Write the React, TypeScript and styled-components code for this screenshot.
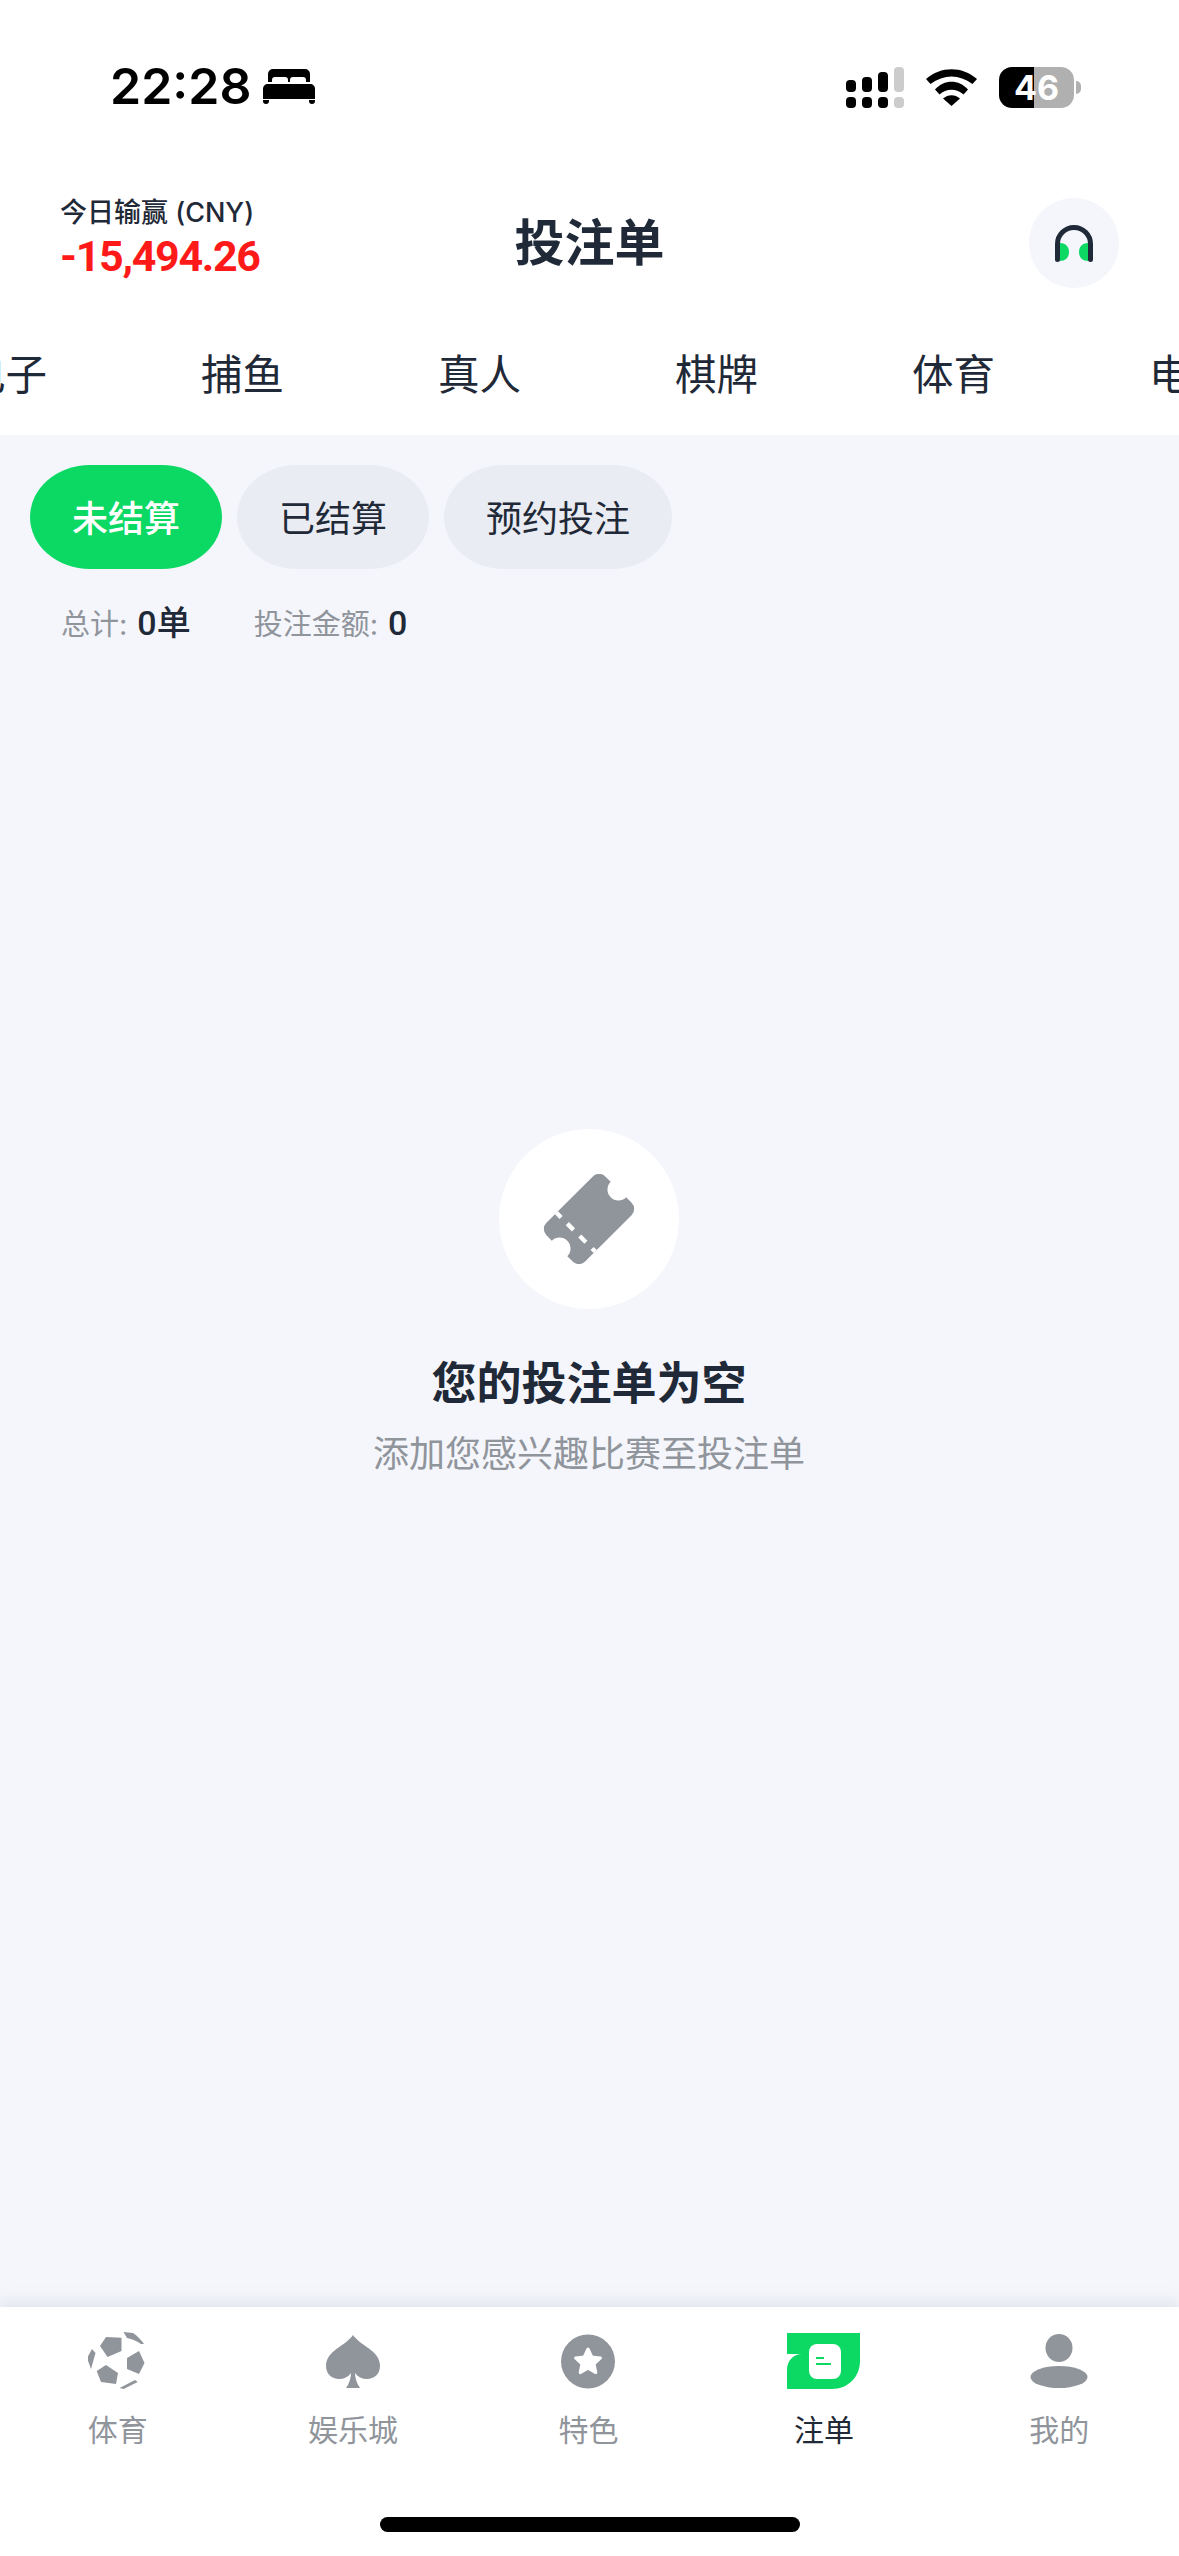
import React from 'react'
import styled, {createGlobalStyle} from 'styled-components'

const GlobalStyle = createGlobalStyle`
  html, body {
    margin: 0;
    padding: 0;
    background: #f4f6fb;
  }
  * {
    box-sizing: border-box;
  }
`;

const CJK = `Inter, "Noto Sans CJK SC", sans-serif`;

const Page = styled.div`
  width: 1179px;
  height: 2556px;
  display: flex;
  flex-direction: column;
  overflow: hidden;
  background: #f4f6fb;
  color: #1f2937;
  font-family: ${CJK};
`;

const TopArea = styled.header`
  background: #fff;
`;

const StatusBar = styled.div`
  height: 188px;
  display: flex;
  justify-content: space-between;
  align-items: flex-start;
  padding: 58px 98px 0 110px;
`;

const StatusLeft = styled.div`
  display: flex;
  align-items: center;
  gap: 12px;
  height: 56px;
`;

const Clock = styled.span`
  font-size: 50px;
  line-height: 56px;
  font-weight: 600;
  color: #000;
`;

const StatusRight = styled.div`
  display: flex;
  align-items: center;
  height: 41px;
  margin-top: 9px;
  gap: 22px;
`;

const Battery = styled.div`
  display: flex;
  align-items: center;
  gap: 2px;
`;

const BatteryBody = styled.div`
  width: 75px;
  height: 41px;
  border-radius: 13px;
  background: linear-gradient(90deg, #000 0 47%, #b0b0b0 47% 100%);
  color: #fff;
  font-size: 34px;
  line-height: 41px;
  font-weight: 700;
  text-align: center;
`;

const BatteryNub = styled.div`
  width: 5px;
  height: 13px;
  border-radius: 0 6px 6px 0;
  background: #b0b0b0;
`;

const HeaderRow = styled.div`
  height: 110px;
  display: grid;
  grid-template-columns: 1fr auto 1fr;
  align-items: center;
  padding: 0 60px;
`;

const Balance = styled.div`
  display: flex;
  flex-direction: column;
  margin-top: -6px;
`;

const BalanceLabel = styled.span`
  font-size: 27px;
  line-height: 32px;
  font-weight: 500;
`;

const BalanceValue = styled.span`
  font-family: Roboto, sans-serif;
  font-size: 43px;
  line-height: 54px;
  font-weight: 700;
  color: #ff1a1a;
  letter-spacing: -1.3px;
`;

const Title = styled.h1`
  margin: 0;
  font-size: 50px;
  line-height: 70px;
  font-weight: 700;
`;

const SupportButton = styled.div`
  justify-self: end;
  width: 90px;
  height: 90px;
  border-radius: 50%;
  background: #f4f6fb;
  display: flex;
  align-items: center;
  justify-content: center;
`;

const CategoryStrip = styled.nav`
  height: 137px;
  display: flex;
  align-items: center;
  overflow: hidden;
  padding-top: 16px;
`;

const CategoryTrack = styled.div`
  display: flex;
  flex: none;
  margin-left: -113px;
`;

const Category = styled.span`
  flex: none;
  width: 237px;
  text-align: center;
  font-size: 41.500px;
  line-height: 56px;
  color: #1f2937;
`;

const Filters = styled.div`
  display: flex;
  gap: 15px;
  padding: 30px 30px 0;
`;

const FilterPill = styled.div<{$active?: boolean; $wide?: boolean}>`
  width: ${p => (p.$wide ? 228 : 192)}px;
  height: 104px;
  border-radius: 60px / 52px;
  background: ${p => (p.$active ? '#0cd964' : '#e9ecf2')};
  color: ${p => (p.$active ? '#fff' : '#1f2937')};
  font-size: 36px;
  font-weight: ${p => (p.$active ? 500 : 400)};
  padding-bottom: 2px;
  display: flex;
  align-items: center;
  justify-content: center;
`;

const Summary = styled.div`
  display: flex;
  gap: 63px;
  padding: 32px 61px 0;
`;

const SummaryItem = styled.div`
  font-size: 29px;
  line-height: 44px;
  color: #90949b;
  display: flex;
  align-items: baseline;
  gap: 10px;
`;

const SummaryValue = styled.b`
  font-family: Roboto, "Noto Sans CJK SC", sans-serif;
  font-size: 34px;
  font-weight: 500;
  color: #1f2937;
`;

const EmptyState = styled.section`
  flex: 1;
  display: flex;
  flex-direction: column;
  align-items: center;
  padding: 482px 1px 0 0;
`;

const EmptyBadge = styled.div`
  width: 180px;
  height: 180px;
  border-radius: 50%;
  background: #fff;
  display: flex;
  align-items: center;
  justify-content: center;
`;

const EmptyTitle = styled.h2`
  margin: 44px 0 0;
  font-size: 45px;
  line-height: 62px;
  font-weight: 700;
`;

const EmptyText = styled.p`
  margin: 14px 0 0;
  font-size: 36px;
  line-height: 50px;
  color: #90949b;
`;

const BottomBar = styled.footer`
  height: 249px;
  background: #fff;
  box-shadow: 0 -6px 14px rgba(150, 156, 170, 0.18);
  display: flex;
  flex-direction: column;
  align-items: center;
`;

const NavRow = styled.div`
  width: 100%;
  display: grid;
  grid-template-columns: repeat(5, 1fr);
  padding: 25px 2px 0 0;
`;

const NavItem = styled.div<{$active?: boolean}>`
  display: flex;
  flex-direction: column;
  align-items: center;
  color: ${p => (p.$active ? '#1f2937' : '#90949b')};
  font-size: 30px;
  line-height: 42px;
`;

const NavIcon = styled.div`
  height: 58px;
  display: flex;
  align-items: center;
  justify-content: center;
  margin-bottom: 19px;
`;

const HomeIndicator = styled.div`
  width: 420px;
  height: 15px;
  border-radius: 8px;
  background: #000;
  margin-top: 66px;
`;

const BedIcon = () => (
  <svg width="52" height="35" viewBox="0 0 52 35">
    <path fill="#000" d="M5 13V5a5 5 0 0 1 5-5h32a5 5 0 0 1 5 5v8h-4v-2c0-2-1-3-3-3H30c-2 0-3 1-3 3v2h-2v-2c0-2-1-3-3-3H12c-2 0-3 1-3 3v2z" />
    <path fill="#000" d="M5 15h42c3 0 5 2 5 5v10H0V20c0-3 2-5 5-5z" />
    <path fill="#000" d="M0 31h6v1a3 3 0 0 1-6 0zM46 31h6v1a3 3 0 0 1-6 0z" />
  </svg>
);

const SignalIcon = () => {
  const bars = [
    {x: 0, top: 13, fill: '#000'},
    {x: 16, top: 10, fill: '#000'},
    {x: 32, top: 5, fill: '#000'},
    {x: 48, top: 0, fill: '#ccc'},
  ];
  return (
    <svg width="58" height="41" viewBox="0 0 58 41">
      {bars.map(b => (
        <g key={b.x} fill={b.fill}>
          <rect x={b.x} y={b.top} width="10" height={25 - b.top} rx="4" />
          <rect x={b.x} y="30" width="10" height="11" rx="4" />
        </g>
      ))}
    </svg>
  );
};

const WifiIcon = () => (
  <svg width="51" height="37" viewBox="0 0 51 37" fill="#000">
    <path d="M0 10C15-3 36-3 51 10l-4.500 5C33 5 18 5 4.500 15z" />
    <path d="M9 20.500C18 10 33 10 42 20.500l-4.500 5C31 19 20 19 13.500 25.500z" />
    <path d="M17 29.500c5-4.500 12-4.500 17 0L25.500 37z" />
  </svg>
);

const HeadsetIcon = () => (
  <svg width="38" height="37" viewBox="0 0 38 37">
    <path fill="#0cd964" d="M5 18c6 0 9 4 9 9s-3 9-9 9zM33 18c-6 0-9 4-9 9s3 9 9 9z" />
    <path fill="none" stroke="#1f2937" strokeWidth="5" strokeLinecap="round" d="M2.500 34.500V19a16.500 16.500 0 0 1 33 0v15.500" />
  </svg>
);

const TicketIcon = () => (
  <svg width="92" height="90" viewBox="-42 -41 84 82">
    <g transform="rotate(-45)">
      <path
        fill="#90949b"
        d="M-30-25H30a8 8 0 0 1 8 8v7a10 10 0 0 0 0 20v7a8 8 0 0 1-8 8H-30a8 8 0 0 1-8-8v-7a10 10 0 0 0 0-20v-7a8 8 0 0 1 8-8z"
      />
      <line x1="-17" y1="-25" x2="-17" y2="25" stroke="#fff" strokeWidth="4" strokeDasharray="6 8 8 8 8 8 6" />
    </g>
  </svg>
);

const SoccerIcon = () => (
  <svg width="60" height="60" viewBox="2 0 60 60" fill="#90949b">
    <path d="M14 15l6-9 15.500.7V20l-14 6z" />
    <path d="M41 27l12-7 5.500 12L53 43l-12-5z" />
    <path d="M10.700 40L20 34l12 8-2 11-15-2z" />
    <path d="M6 18l3.500 4L5 38l-4-11z" />
    <path d="M37.500 1L47 2c5 3 8 7 11 11h-3c-4-3-9-5-14-6z" />
    <path d="M33.600 57L49 49l2.600 2-14 7z" />
  </svg>
);

const SpadeIcon = () => (
  <svg width="54" height="53" viewBox="0 0 54 53" fill="#90949b">
    <path d="M27 0C23 6 14 11 8 16 3 20 0 25 0 31c0 8 6 13 13 13 5 0 9-2 12-6 0 5-2 11-5 15h14c-3-4-5-10-5-15 3 4 7 6 12 6 7 0 13-5 13-13 0-6-3-11-8-15C40 11 31 6 27 0z" />
  </svg>
);

const StarBadgeIcon = () => (
  <svg width="54" height="55" viewBox="0 0 54 55">
    <circle cx="27" cy="27.500" r="27" fill="#90949b" />
    <path
      fill="#fff"
      stroke="#fff"
      strokeWidth="3"
      strokeLinejoin="round"
      d="M27 15l3.800 8 8.700 1-6.400 6 1.700 8.600L27 34.300l-7.800 4.300L20.900 30l-6.400-6 8.700-1z"
    />
  </svg>
);

const SlipIcon = () => (
  <svg width="73" height="56" viewBox="0 0 73 56">
    <path fill="#0cd964" d="M0 0h73v28c0 16-12 28-28 28H0V37c0-9 6-16 15-16H0z" />
    <rect x="22" y="11" width="32" height="35" rx="8" fill="#fff" />
    <rect x="29" y="24" width="8" height="2" fill="#0cd964" />
    <rect x="29" y="30" width="15" height="2" fill="#0cd964" />
  </svg>
);

const UserIcon = () => (
  <svg width="58" height="54" viewBox="0 0 58 54" fill="#90949b">
    <ellipse cx="29" cy="14" rx="13.500" ry="14" />
    <ellipse cx="29" cy="43" rx="28.500" ry="11" />
  </svg>
);

const categories = ['电子', '捕鱼', '真人', '棋牌', '体育', '电竞'];

const navItems = [
  {label: '体育', icon: <SoccerIcon />},
  {label: '娱乐城', icon: <SpadeIcon />},
  {label: '特色', icon: <StarBadgeIcon />},
  {label: '注单', icon: <SlipIcon />, active: true},
  {label: '我的', icon: <UserIcon />},
];

export default function App() {
  return (
    <Page>
      <GlobalStyle />
      <TopArea>
        <StatusBar>
          <StatusLeft>
            <Clock>22:28</Clock>
            <BedIcon />
          </StatusLeft>
          <StatusRight>
            <SignalIcon />
            <WifiIcon />
            <Battery>
              <BatteryBody>46</BatteryBody>
              <BatteryNub />
            </Battery>
          </StatusRight>
        </StatusBar>
        <HeaderRow>
          <Balance>
            <BalanceLabel>今日输赢 (CNY)</BalanceLabel>
            <BalanceValue>-15,494.26</BalanceValue>
          </Balance>
          <Title>投注单</Title>
          <SupportButton>
            <HeadsetIcon />
          </SupportButton>
        </HeaderRow>
        <CategoryStrip>
          <CategoryTrack>
            {categories.map(name => (
              <Category key={name}>{name}</Category>
            ))}
          </CategoryTrack>
        </CategoryStrip>
      </TopArea>
      <Filters>
        <FilterPill $active>未结算</FilterPill>
        <FilterPill>已结算</FilterPill>
        <FilterPill $wide>预约投注</FilterPill>
      </Filters>
      <Summary>
        <SummaryItem>
          总计: <SummaryValue>0单</SummaryValue>
        </SummaryItem>
        <SummaryItem>
          投注金额: <SummaryValue>0</SummaryValue>
        </SummaryItem>
      </Summary>
      <EmptyState>
        <EmptyBadge>
          <TicketIcon />
        </EmptyBadge>
        <EmptyTitle>您的投注单为空</EmptyTitle>
        <EmptyText>添加您感兴趣比赛至投注单</EmptyText>
      </EmptyState>
      <BottomBar>
        <NavRow>
          {navItems.map(item => (
            <NavItem key={item.label} $active={item.active}>
              <NavIcon>{item.icon}</NavIcon>
              {item.label}
            </NavItem>
          ))}
        </NavRow>
        <HomeIndicator />
      </BottomBar>
    </Page>
  );
}
